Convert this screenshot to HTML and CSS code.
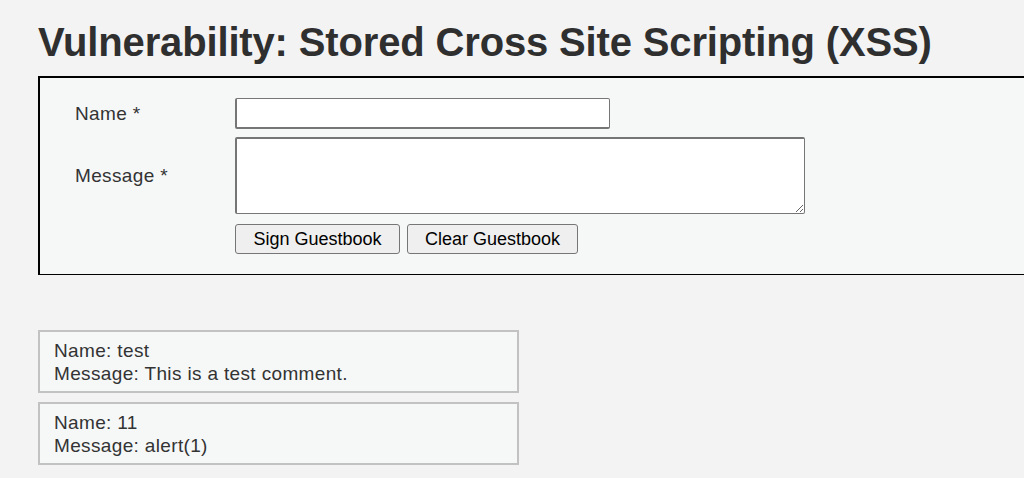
FILE: index.html
```html
<!DOCTYPE html>
<html lang="en">
<head>
<meta charset="utf-8">
<title>Vulnerability: Stored Cross Site Scripting (XSS)</title>
<link rel="stylesheet" href="styles.css">
</head>
<body>
<div class="page">
  <h1 class="title">Vulnerability: Stored Cross Site Scripting (XSS)</h1>
  <div class="code-area">
    <form class="guestbook" onsubmit="return false;">
      <label class="label" for="txtName">Name *</label>
      <input class="field" id="txtName" type="text">
      <label class="label" for="mtxMessage">Message *</label>
      <textarea class="message" id="mtxMessage"></textarea>
      <span></span>
      <div class="actions">
        <button class="btn btn-sign" type="button">Sign Guestbook</button>
        <button class="btn btn-clear" type="button">Clear Guestbook</button>
      </div>
    </form>
  </div>
  <div class="comments">
    <div class="comment">Name: test<br>Message: This is a test comment.</div>
    <div class="comment">Name: 11<br>Message: alert(1)</div>
  </div>
</div>
</body>
</html>
```

FILE: styles.css
```css
html, body {
  margin: 0;
  padding: 0;
  background: #f3f3f3;
  overflow: hidden;
}
body {
  font-family: "Liberation Sans", Arial, sans-serif;
  color: #333;
  width: 1024px;
  height: 478px;
}
.page {
  padding-left: 38px;
}
.title {
  margin: 0;
  padding-top: 19px;
  height: 76px;
  box-sizing: border-box;
  font-size: 40px;
  line-height: 46px;
  font-weight: bold;
  letter-spacing: -0.15px;
  color: #2f2f2f;
}
.code-area {
  margin-right: -40px;
  background: #f6f8f8;
  border: 2px solid #000;
  border-bottom-width: 1px;
  padding: 20px 0 20px 35px;
  height: 199px;
  box-sizing: border-box;
}
.guestbook {
  display: grid;
  grid-template-columns: 160px auto;
  row-gap: 8px;
  align-items: center;
  justify-items: start;
}
.label {
  font-size: 19px;
  letter-spacing: 0.35px;
  color: #333;
}
.field {
  width: 375px;
  height: 31px;
  box-sizing: border-box;
  margin: 0;
  background: #fff;
  border: 2px solid #767676;
  border-right-width: 1px;
  border-top-width: 1px;
  border-radius: 2px;
  font-family: "Liberation Sans", Arial, sans-serif;
}
.message {
  width: 570px;
  height: 77px;
  box-sizing: border-box;
  margin: 0;
  background: #fff;
  border: 2px solid #767676;
  border-right-width: 1px;
  border-bottom-width: 1px;
  border-radius: 2px;
  resize: both;
  font-family: "Liberation Sans", Arial, sans-serif;
}
.actions {
  display: flex;
  gap: 7px;
  margin-top: 2px;
}
.btn {
  height: 30px;
  box-sizing: border-box;
  margin: 0;
  padding: 0 11px;
  background: #efefef;
  border: 1px solid #767676;
  border-radius: 3px;
  font-family: "Liberation Sans", Arial, sans-serif;
  font-size: 18px;
  color: #000;
}
.btn-sign { width: 165px; }
.btn-clear { width: 171px; }
.comments {
  margin-top: 55px;
  width: 481px;
}
.comment {
  background: #f6f8f8;
  border: 2px solid #c2c2c2;
  padding: 7px 14px 6px 14px;
  height: 63px;
  box-sizing: border-box;
  margin-bottom: 9px;
  font-size: 19px;
  line-height: 23px;
  letter-spacing: 0.35px;
  color: #333;
  white-space: nowrap;
}
```
